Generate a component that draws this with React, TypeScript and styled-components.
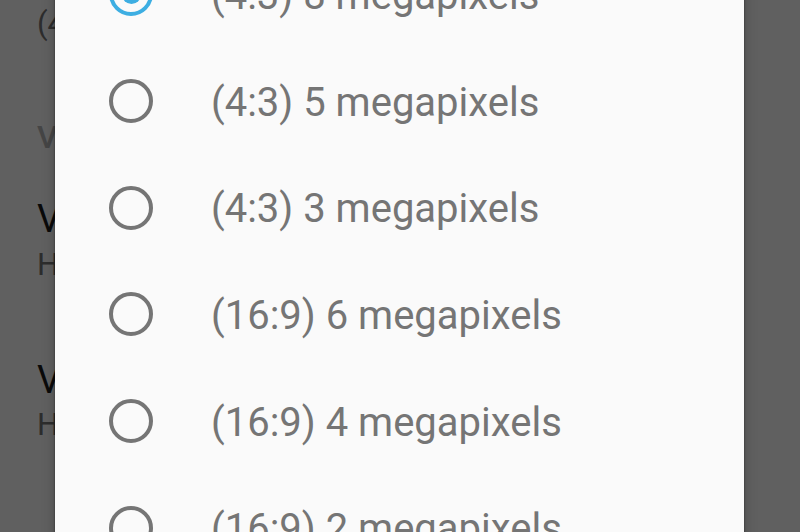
import React from "react";
import styled, { createGlobalStyle } from "styled-components";

const Global = createGlobalStyle`
  html, body { margin: 0; padding: 0; }
  body {
    width: 800px;
    height: 532px;
    overflow: hidden;
    font-family: Roboto, "Noto Sans", "Liberation Sans", sans-serif;
    background: #fafafa;
  }
`;

const Screen = styled.div`
  position: relative;
  width: 800px;
  height: 532px;
  overflow: hidden;
  background: #fafafa;
`;

const SettingsList = styled.div`
  display: flex;
  flex-direction: column;
  padding: 8px 0 0 37px;
`;

const Summary = styled.div<{ $gap?: number }>`
  font-size: 31px;
  line-height: 1;
  color: #757575;
  margin-top: ${(p) => p.$gap ?? 0}px;
  white-space: nowrap;
`;

const Header = styled.div<{ $gap?: number }>`
  font-size: 32px;
  line-height: 1;
  font-weight: 500;
  color: #b4b4b4;
  margin-top: ${(p) => p.$gap ?? 0}px;
  white-space: nowrap;
`;

const Title = styled.div<{ $gap?: number }>`
  font-size: 38px;
  line-height: 1;
  color: #1c1c1c;
  margin-top: ${(p) => p.$gap ?? 0}px;
  white-space: nowrap;
`;

const Scrim = styled.div`
  position: absolute;
  inset: 0;
  background: rgba(0, 0, 0, 0.616);
`;

const Dialog = styled.div`
  position: absolute;
  left: 55px;
  right: 56px;
  top: -59px;
  bottom: -120px;
  background: #fafafa;
  box-shadow: 0 0 2px rgba(0, 0, 0, 0.45), 0 0 12px rgba(0, 0, 0, 0.25);
  display: flex;
  flex-direction: column;
`;

const Row = styled.div`
  height: 106.7px;
  flex: none;
  display: flex;
  align-items: center;
  padding-left: 54px;
  gap: 58px;
`;

const Radio = styled.span<{ $checked?: boolean }>`
  box-sizing: border-box;
  flex: none;
  width: 44px;
  height: 44px;
  border-radius: 50%;
  border: 4.3px solid ${(p) => (p.$checked ? "#3daee2" : "#757575")};
  display: flex;
  align-items: center;
  justify-content: center;
  &::after {
    content: "";
    display: ${(p) => (p.$checked ? "block" : "none")};
    width: 19px;
    height: 19px;
    border-radius: 50%;
    background: #3daee2;
  }
`;

const Label = styled.span`
  font-size: 40px;
  line-height: 1;
  padding-top: 3px;
  color: #757575;
  white-space: nowrap;
`;

const options = [
  "(4:3) 8 megapixels",
  "(4:3) 5 megapixels",
  "(4:3) 3 megapixels",
  "(16:9) 6 megapixels",
  "(16:9) 4 megapixels",
  "(16:9) 2 megapixels",
];

export default function App() {
  return (
    <>
      <Global />
      <Screen>
        <SettingsList>
          <Summary>(4:3) 8 megapixels</Summary>
          <Header $gap={82}>VIDEO</Header>
          <Title $gap={47}>Video quality</Title>
          <Summary $gap={11}>HD 1080p</Summary>
          <Title $gap={81}>Video duration</Title>
          <Summary $gap={10}>Handheld</Summary>
        </SettingsList>
        <Scrim />
        <Dialog>
          {options.map((o, i) => (
            <Row key={o}>
              <Radio $checked={i === 0} />
              <Label>{o}</Label>
            </Row>
          ))}
        </Dialog>
      </Screen>
    </>
  );
}
